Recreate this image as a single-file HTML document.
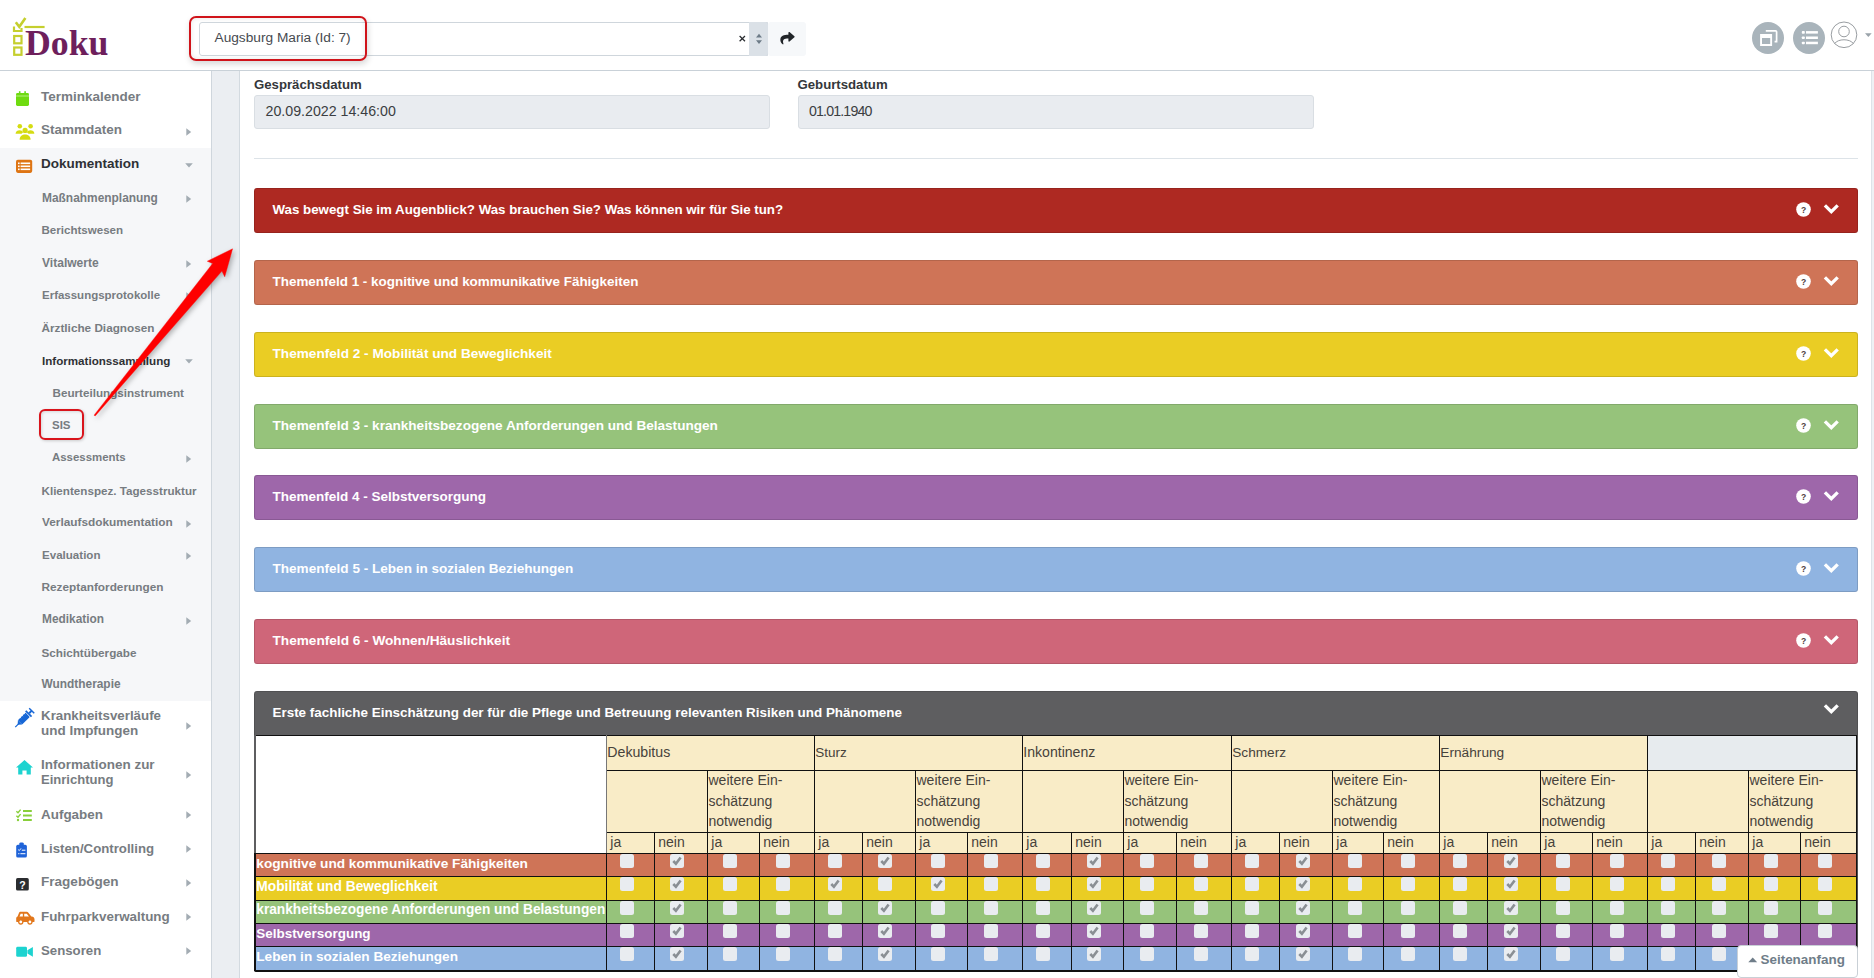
<!DOCTYPE html><html><head><meta charset="utf-8"><style>
html,body{margin:0;padding:0;}
body{width:1874px;height:978px;overflow:hidden;position:relative;background:#fff;font-family:"Liberation Sans",sans-serif;}
.t{position:absolute;white-space:nowrap;line-height:1;}
.r{position:absolute;}
svg{position:absolute;overflow:visible;}
</style></head><body>
<div class="r" style="left:0.00px;top:70.00px;width:1874.00px;height:1.00px;background:#c9d1d8;"></div>
<div class="r" style="left:0.00px;top:148.00px;width:211.00px;height:553.00px;background:#f6f7f9;"></div>
<div class="r" style="left:211.00px;top:71.00px;width:1.00px;height:907.00px;background:#cfd6dd;"></div>
<div class="r" style="left:212.00px;top:71.00px;width:28.00px;height:907.00px;background:#ebeef2;"></div>
<div class="r" style="left:239.00px;top:71.00px;width:1.00px;height:907.00px;background:#d3dae0;"></div>
<div class="r" style="left:1871.00px;top:71.00px;width:1.00px;height:907.00px;background:#dde3e8;"></div>
<div class="r" style="left:1872.00px;top:71.00px;width:2.00px;height:907.00px;background:#eef1f4;"></div>
<svg style="left:0;top:0" width="120" height="70" viewBox="0 0 120 70">
<g fill="none" stroke="#c5cf2e" stroke-width="2.2">
<path d="M14 26.5 V31 H21.5 V28"/>
<rect x="14.2" y="36" width="7.3" height="7.3"/>
<rect x="14.2" y="47.5" width="7.3" height="7.3"/>
<path d="M15.8 22.2 L19.3 26.8 L25.4 18" stroke-width="2.6"/>
<path d="M24.5 27 H44.6" stroke-width="2.2"/>
</g>
<text x="25" y="55" font-family="Liberation Serif" font-weight="bold" font-size="35.5" fill="#6e1f5c" textLength="83.5" lengthAdjust="spacingAndGlyphs">Doku</text>
</svg>
<div class="r" style="left:199.00px;top:22.00px;width:569.00px;height:34.00px;background:#fff;box-sizing:border-box;border:1px solid #cfd6dc;border-radius:3px 0 0 3px;"></div>
<div class="r" style="left:749.00px;top:22.00px;width:19.00px;height:34.00px;background:#dbe1e7;border-radius:0 3px 3px 0;"></div>
<div class="r" style="left:768.00px;top:22.00px;width:38.00px;height:34.00px;background:#f6f8fa;border-radius:3px;"></div>
<div class="t" style="left:214.50px;top:31.10px;font-size:13.7px;font-weight:400;color:#464a4f;">Augsburg Maria (Id: 7)</div>
<svg style="left:738px;top:34px" width="9" height="9" viewBox="0 0 9 9"><path d="M1.6 2.0 L7.0 7.3 M7.0 2.0 L1.6 7.3" stroke="#2a2d31" stroke-width="1.25"/></svg>
<svg style="left:754px;top:32px" width="10" height="14" viewBox="0 0 10 14"><path d="M2 5.5 L5 1.8 L8 5.5Z M2 8.2 L5 12 L8 8.2Z" fill="#6d7b87"/></svg>
<svg style="left:780px;top:30.7px" width="15" height="14" viewBox="0 0 512 500"><path d="M503.691 189.836L327.687 37.851C312.281 24.546 288 35.347 288 56.015v80.053C127.371 137.907 0 170.1 0 322.326c0 61.441 39.581 122.309 83.333 154.132 13.653 9.931 33.111-2.533 28.077-18.631C66.066 312.814 132.917 274.316 288 272.085V360c0 20.7 24.3 31.453 39.687 18.164l176.004-152c11.071-9.562 11.086-26.753 0-36.328z" fill="#212529"/></svg>
<div class="r" style="left:189.00px;top:15.50px;width:178.00px;height:45.50px;background:transparent;box-sizing:border-box;border:2.5px solid #d0131a;border-radius:7px;box-shadow:inset 0 0 5px rgba(0,0,0,0.10), 1px 3px 6px rgba(0,0,0,0.16);"></div>
<svg style="left:1751px;top:21px" width="124" height="34" viewBox="0 0 124 34">
<circle cx="17" cy="17" r="16" fill="#a9b4bb"/>
<path d="M14.8 9.8 H24.6 C25.2 9.8 25.6 10.2 25.6 10.8 V20.6 H23.6" fill="none" stroke="#fff" stroke-width="1.7"/>
<path d="M9.1 13 H21.1 V25 H9.1Z M11 17 V23.1 H19.2 V17Z" fill="#fff" fill-rule="evenodd"/>
<circle cx="58" cy="17" r="16" fill="#a9b4bb"/>
<rect x="50.8" y="10.1" width="3" height="2.6" rx="0.8" fill="#fff"/>
<rect x="50.8" y="15.5" width="3" height="2.6" rx="0.8" fill="#fff"/>
<rect x="50.8" y="20.7" width="3" height="2.6" rx="0.8" fill="#fff"/>
<rect x="55" y="10.1" width="11.9" height="2.5" fill="#fff"/>
<rect x="55" y="15.5" width="11.9" height="2.5" fill="#fff"/>
<rect x="55" y="20.7" width="11.9" height="2.5" fill="#fff"/>
<circle cx="93" cy="13.8" r="12.8" fill="none" stroke="#8d9296" stroke-width="0.9"/>
<circle cx="93" cy="10.5" r="5.3" fill="none" stroke="#8d9296" stroke-width="0.9"/>
<path d="M83.6 22.6 C87 17.5 99 17.5 102.4 22.6" fill="none" stroke="#8d9296" stroke-width="0.9"/>
<path d="M114 12.3 H120.7 L117.35 16Z" fill="#9aa3aa"/>
</svg>
<div class="t" style="left:41.00px;top:89.57px;font-size:13.5px;font-weight:700;color:#777c81;">Terminkalender</div>
<div class="t" style="left:41.00px;top:123.37px;font-size:13.5px;font-weight:700;color:#777c81;">Stammdaten</div>
<svg style="left:186px;top:127.50px" width="6" height="8" viewBox="0 0 6 8"><path d="M0.3 0.3 L5.2 4 L0.3 7.7Z" fill="#a3acb3"/></svg>
<div class="t" style="left:41.00px;top:157.37px;font-size:13.5px;font-weight:700;color:#2f3135;">Dokumentation</div>
<svg style="left:184.5px;top:163.30px" width="8" height="5" viewBox="0 0 8 5"><path d="M0.2 0.2 H7.8 L4 4.6Z" fill="#a3acb3"/></svg>
<div class="t" style="left:42.00px;top:192.60px;font-size:11.93px;font-weight:700;color:#777c81;">Maßnahmenplanung</div>
<svg style="left:186px;top:195.20px" width="6" height="8" viewBox="0 0 6 8"><path d="M0.3 0.3 L5.2 4 L0.3 7.7Z" fill="#a3acb3"/></svg>
<div class="t" style="left:41.50px;top:225.34px;font-size:11.57px;font-weight:700;color:#777c81;">Berichtswesen</div>
<div class="t" style="left:42.00px;top:257.36px;font-size:12.05px;font-weight:700;color:#777c81;">Vitalwerte</div>
<svg style="left:186px;top:260.06px" width="6" height="8" viewBox="0 0 6 8"><path d="M0.3 0.3 L5.2 4 L0.3 7.7Z" fill="#a3acb3"/></svg>
<div class="t" style="left:42.00px;top:290.26px;font-size:11.49px;font-weight:700;color:#777c81;">Erfassungsprotokolle</div>
<svg style="left:186px;top:292.49px" width="6" height="8" viewBox="0 0 6 8"><path d="M0.3 0.3 L5.2 4 L0.3 7.7Z" fill="#a3acb3"/></svg>
<div class="t" style="left:41.50px;top:322.47px;font-size:11.76px;font-weight:700;color:#777c81;">Ärztliche Diagnosen</div>
<div class="t" style="left:42.00px;top:355.02px;font-size:11.61px;font-weight:700;color:#2f3135;">Informationssammlung</div>
<svg style="left:184.5px;top:359.15px" width="8" height="5" viewBox="0 0 8 5"><path d="M0.2 0.2 H7.8 L4 4.6Z" fill="#a3acb3"/></svg>
<div class="t" style="left:52.50px;top:387.40px;font-size:11.67px;font-weight:700;color:#777c81;">Beurteilungsinstrument</div>
<div class="t" style="left:52.00px;top:419.98px;font-size:11.5px;font-weight:700;color:#777c81;">SIS</div>
<div class="t" style="left:52.00px;top:452.46px;font-size:11.43px;font-weight:700;color:#777c81;">Assessments</div>
<svg style="left:186px;top:454.64px" width="6" height="8" viewBox="0 0 6 8"><path d="M0.3 0.3 L5.2 4 L0.3 7.7Z" fill="#a3acb3"/></svg>
<div class="t" style="left:41.50px;top:484.71px;font-size:11.65px;font-weight:700;color:#777c81;">Klientenspez. Tagesstruktur</div>
<div class="t" style="left:42.00px;top:516.98px;font-size:11.84px;font-weight:700;color:#777c81;">Verlaufsdokumentation</div>
<svg style="left:186px;top:519.50px" width="6" height="8" viewBox="0 0 6 8"><path d="M0.3 0.3 L5.2 4 L0.3 7.7Z" fill="#a3acb3"/></svg>
<div class="t" style="left:42.00px;top:549.64px;font-size:11.57px;font-weight:700;color:#777c81;">Evaluation</div>
<svg style="left:186px;top:551.93px" width="6" height="8" viewBox="0 0 6 8"><path d="M0.3 0.3 L5.2 4 L0.3 7.7Z" fill="#a3acb3"/></svg>
<div class="t" style="left:41.50px;top:581.86px;font-size:11.81px;font-weight:700;color:#777c81;">Rezeptanforderungen</div>
<div class="t" style="left:42.00px;top:614.23px;font-size:11.89px;font-weight:700;color:#777c81;">Medikation</div>
<svg style="left:186px;top:616.79px" width="6" height="8" viewBox="0 0 6 8"><path d="M0.3 0.3 L5.2 4 L0.3 7.7Z" fill="#a3acb3"/></svg>
<div class="t" style="left:41.50px;top:646.81px;font-size:11.71px;font-weight:700;color:#777c81;">Schichtübergabe</div>
<div class="t" style="left:41.50px;top:679.08px;font-size:11.9px;font-weight:700;color:#777c81;">Wundtherapie</div>
<div class="t" style="left:41.00px;top:709.32px;font-size:13.33px;font-weight:700;color:#777c81;">Krankheitsverläufe</div>
<div class="t" style="left:41.00px;top:723.99px;font-size:13.48px;font-weight:700;color:#777c81;">und Impfungen</div>
<svg style="left:186px;top:721.50px" width="6" height="8" viewBox="0 0 6 8"><path d="M0.3 0.3 L5.2 4 L0.3 7.7Z" fill="#a3acb3"/></svg>
<div class="t" style="left:41.00px;top:758.41px;font-size:13.46px;font-weight:700;color:#777c81;">Informationen zur</div>
<div class="t" style="left:41.00px;top:772.65px;font-size:13.05px;font-weight:700;color:#777c81;">Einrichtung</div>
<svg style="left:186px;top:770.50px" width="6" height="8" viewBox="0 0 6 8"><path d="M0.3 0.3 L5.2 4 L0.3 7.7Z" fill="#a3acb3"/></svg>
<div class="t" style="left:41.00px;top:807.51px;font-size:13.45px;font-weight:700;color:#777c81;">Aufgaben</div>
<svg style="left:186px;top:810.90px" width="6" height="8" viewBox="0 0 6 8"><path d="M0.3 0.3 L5.2 4 L0.3 7.7Z" fill="#a3acb3"/></svg>
<div class="t" style="left:41.00px;top:841.73px;font-size:13.23px;font-weight:700;color:#777c81;">Listen/Controlling</div>
<svg style="left:186px;top:844.93px" width="6" height="8" viewBox="0 0 6 8"><path d="M0.3 0.3 L5.2 4 L0.3 7.7Z" fill="#a3acb3"/></svg>
<div class="t" style="left:41.00px;top:875.48px;font-size:13.56px;font-weight:700;color:#777c81;">Fragebögen</div>
<svg style="left:186px;top:878.96px" width="6" height="8" viewBox="0 0 6 8"><path d="M0.3 0.3 L5.2 4 L0.3 7.7Z" fill="#a3acb3"/></svg>
<div class="t" style="left:41.00px;top:909.65px;font-size:13.4px;font-weight:700;color:#777c81;">Fuhrparkverwaltung</div>
<svg style="left:186px;top:912.99px" width="6" height="8" viewBox="0 0 6 8"><path d="M0.3 0.3 L5.2 4 L0.3 7.7Z" fill="#a3acb3"/></svg>
<div class="t" style="left:41.00px;top:943.82px;font-size:13.23px;font-weight:700;color:#777c81;">Sensoren</div>
<svg style="left:186px;top:947.02px" width="6" height="8" viewBox="0 0 6 8"><path d="M0.3 0.3 L5.2 4 L0.3 7.7Z" fill="#a3acb3"/></svg>
<svg style="left:0;top:0" width="40" height="978" viewBox="0 0 40 978">
<rect x="16" y="93" width="13" height="12.9" rx="1.4" fill="#6fdb10"/>
<rect x="18.9" y="91.2" width="1.6" height="3" fill="#6bd91c"/><rect x="24.3" y="91.2" width="1.6" height="3" fill="#6bd91c"/>
<rect x="16" y="95.6" width="13" height="0.8" fill="#c8f5a0"/>
<g fill="#d5dc12">
<circle cx="19.8" cy="126.3" r="2.3"/><circle cx="30.6" cy="126.3" r="2.3"/><circle cx="25.1" cy="130.4" r="2.6"/>
<path d="M15.6 133.8 C15.6 129.6 22.4 129.3 23 132.6 L21.5 133.8Z"/><path d="M34.4 133.8 C34.4 129.6 27.6 129.3 27 132.6 L28.5 133.8Z"/>
<path d="M19.6 139.8 C19.6 132.8 30.6 132.8 30.6 139.8Z"/>
</g>
<rect x="16" y="159.8" width="16.2" height="13.1" rx="1.8" fill="#de7514"/>
<g fill="#fff"><rect x="18" y="162.5" width="1.6" height="1.6"/><rect x="18" y="165.5" width="1.6" height="1.6"/><rect x="18" y="168.5" width="1.6" height="1.6"/>
<rect x="20.6" y="162.5" width="9.5" height="1.6"/><rect x="20.6" y="165.5" width="9.5" height="1.6"/><rect x="20.6" y="168.5" width="9.5" height="1.6"/></g>
<g transform="translate(23.2,719.2) rotate(45) scale(1.12)" fill="#1767d6">
<rect x="-2.7" y="-5.6" width="5.4" height="9.6" rx="0.6"/><path d="M-2.7 4 L0 7 L2.7 4Z"/><rect x="-0.55" y="5" width="1.1" height="5"/>
<rect x="-3.7" y="-7.6" width="7.4" height="1.5"/><rect x="-0.9" y="-10.5" width="1.8" height="3"/><rect x="-3.2" y="-11.4" width="6.4" height="1.3"/>
</g>
<g stroke="#fff" stroke-width="0.8"><path d="M19.2 716.3 L21.1 718.2 M21.2 714.3 L23.1 716.2 M23.2 712.3 L25.1 714.2"/></g>
<path d="M16 767.6 L24.5 760 L33 767.6 H30.8 V774.5 H26.6 V770.4 H22.4 V774.5 H18.2 V767.6Z" fill="#1dd3d0"/>
<g fill="#88cf3a">
<rect x="23" y="810" width="8.8" height="2"/><rect x="23" y="814.5" width="8.8" height="2"/><rect x="23" y="819" width="8.8" height="2"/>
<path d="M16.4 811.3 L18 812.8 L20.6 809.6" fill="none" stroke="#88cf3a" stroke-width="1.4"/>
<path d="M16.4 815.8 L18 817.3 L20.6 814.1" fill="none" stroke="#88cf3a" stroke-width="1.4"/>
<circle cx="18" cy="820" r="1.2"/>
</g>
<rect x="16.2" y="844.8" width="10.7" height="12.8" rx="1.6" fill="#1f63d8"/>
<path d="M19.3 845.2 V843.8 C19.3 842.6 20.2 842.6 21.5 842.6 C22.8 842.6 23.8 842.6 23.8 843.8 V845.2Z" fill="#1f63d8"/>
<path d="M18.2 849.6 L19.3 850.6 L21 848.4" stroke="#fff" stroke-width="0.9" fill="none"/>
<rect x="21.8" y="849.7" width="3.6" height="1" fill="#fff"/><rect x="18.2" y="853.2" width="1.2" height="1" fill="#fff"/><rect x="20.4" y="853.2" width="5" height="1" fill="#fff"/>
<rect x="16" y="878.1" width="12.8" height="12.5" rx="1.6" fill="#2b2d30"/>
<text x="22.4" y="888.6" font-family="Liberation Sans" font-weight="bold" font-size="10.5" fill="#fff" text-anchor="middle">?</text>
<path transform="translate(16.2,910.9) scale(0.0286)" fill="#e2771c" d="M544 192h-16L419.22 56.02A64.025 64.025 0 0 0 369.24 32H155.33c-26.17 0-49.7 15.930-59.42 40.23L48 194.26C20.44 201.4 0 226.21 0 256v112c0 8.84 7.16 16 16 16h48c0 53.02 42.98 96 96 96s96-42.98 96-96h128c0 53.02 42.98 96 96 96s96-42.98 96-96h48c8.84 0 16-7.160 16-16v-80c0-53.02-42.98-96-96-96zM160 432c-26.47 0-48-21.53-48-48s21.53-48 48-48 48 21.53 48 48-21.53 48-48 48zm72-240H116.93l38.4-96H232v96zm48 0V96h89.24l76.8 96H280zm200 240c-26.47 0-48-21.53-48-48s21.53-48 48-48 48 21.53 48 48-21.53 48-48 48z"/>
<rect x="16.2" y="946.8" width="10.8" height="10" rx="1.4" fill="#1dd3d0"/>
<path d="M27.4 950.2 L32.9 946.9 V956.7 L27.4 953.4Z" fill="#1dd3d0"/>
</svg>
<div class="t" style="left:254.00px;top:77.73px;font-size:13.2px;font-weight:700;color:#34373b;">Gesprächsdatum</div>
<div class="t" style="left:797.50px;top:77.73px;font-size:13.2px;font-weight:700;color:#34373b;">Geburtsdatum</div>
<div class="r" style="left:254.00px;top:95.00px;width:516.00px;height:33.60px;background:#e9ecf0;box-sizing:border-box;border:1px solid #d9dee3;border-radius:3px;"></div>
<div class="r" style="left:797.50px;top:95.00px;width:516.50px;height:33.60px;background:#e9ecf0;box-sizing:border-box;border:1px solid #d9dee3;border-radius:3px;"></div>
<div class="t" style="left:265.60px;top:103.98px;font-size:14.2px;font-weight:400;color:#3b3e42;">20.09.2022 14:46:00</div>
<div class="t" style="left:809.00px;top:103.98px;font-size:14.2px;font-weight:400;color:#3b3e42;letter-spacing:-0.85px;">01.01.1940</div>
<div class="r" style="left:254.00px;top:158.00px;width:1604.00px;height:1.00px;background:#dde3e8;"></div>
<div class="r" style="left:254.00px;top:188.00px;width:1604.00px;height:45.00px;background:#ae2922;box-sizing:border-box;border:1px solid rgba(0,0,0,0.13);border-radius:3px;"></div>
<div class="t" style="left:272.50px;top:203.32px;font-size:13.32px;font-weight:700;color:#fff;">Was bewegt Sie im Augenblick? Was brauchen Sie? Was können wir für Sie tun?</div>
<svg style="left:1795.5px;top:202.00px" width="15" height="15" viewBox="0 0 15 15"><circle cx="7.5" cy="7.5" r="7.3" fill="#fff"/><text x="7.6" y="10.6" font-family="Liberation Sans" font-weight="bold" font-size="8.6" fill="#4d4040" text-anchor="middle">?</text></svg>
<svg style="left:1823px;top:203.00px" width="17" height="12" viewBox="0 0 17 12"><path d="M1.9 2.4 L8.3 8.7 L14.7 2.4" fill="none" stroke="#fff" stroke-width="3.3"/></svg>
<div class="r" style="left:254.00px;top:260.00px;width:1604.00px;height:45.00px;background:#cf7457;box-sizing:border-box;border:1px solid rgba(0,0,0,0.13);border-radius:3px;"></div>
<div class="t" style="left:272.50px;top:275.22px;font-size:13.44px;font-weight:700;color:#fff;">Themenfeld 1 - kognitive und kommunikative Fähigkeiten</div>
<svg style="left:1795.5px;top:274.00px" width="15" height="15" viewBox="0 0 15 15"><circle cx="7.5" cy="7.5" r="7.3" fill="#fff"/><text x="7.6" y="10.6" font-family="Liberation Sans" font-weight="bold" font-size="8.6" fill="#4d4040" text-anchor="middle">?</text></svg>
<svg style="left:1823px;top:275.00px" width="17" height="12" viewBox="0 0 17 12"><path d="M1.9 2.4 L8.3 8.7 L14.7 2.4" fill="none" stroke="#fff" stroke-width="3.3"/></svg>
<div class="r" style="left:254.00px;top:332.00px;width:1604.00px;height:45.00px;background:#eacd24;box-sizing:border-box;border:1px solid rgba(0,0,0,0.13);border-radius:3px;"></div>
<div class="t" style="left:272.50px;top:347.06px;font-size:13.63px;font-weight:700;color:#fff;">Themenfeld 2 - Mobilität und Beweglichkeit</div>
<svg style="left:1795.5px;top:346.00px" width="15" height="15" viewBox="0 0 15 15"><circle cx="7.5" cy="7.5" r="7.3" fill="#fff"/><text x="7.6" y="10.6" font-family="Liberation Sans" font-weight="bold" font-size="8.6" fill="#4d4040" text-anchor="middle">?</text></svg>
<svg style="left:1823px;top:347.00px" width="17" height="12" viewBox="0 0 17 12"><path d="M1.9 2.4 L8.3 8.7 L14.7 2.4" fill="none" stroke="#fff" stroke-width="3.3"/></svg>
<div class="r" style="left:254.00px;top:404.00px;width:1604.00px;height:45.00px;background:#96c37b;box-sizing:border-box;border:1px solid rgba(0,0,0,0.13);border-radius:3px;"></div>
<div class="t" style="left:272.50px;top:419.10px;font-size:13.59px;font-weight:700;color:#fff;">Themenfeld 3 - krankheitsbezogene Anforderungen und Belastungen</div>
<svg style="left:1795.5px;top:418.00px" width="15" height="15" viewBox="0 0 15 15"><circle cx="7.5" cy="7.5" r="7.3" fill="#fff"/><text x="7.6" y="10.6" font-family="Liberation Sans" font-weight="bold" font-size="8.6" fill="#4d4040" text-anchor="middle">?</text></svg>
<svg style="left:1823px;top:419.00px" width="17" height="12" viewBox="0 0 17 12"><path d="M1.9 2.4 L8.3 8.7 L14.7 2.4" fill="none" stroke="#fff" stroke-width="3.3"/></svg>
<div class="r" style="left:254.00px;top:475.00px;width:1604.00px;height:45.00px;background:#9e67aa;box-sizing:border-box;border:1px solid rgba(0,0,0,0.13);border-radius:3px;"></div>
<div class="t" style="left:272.50px;top:490.18px;font-size:13.49px;font-weight:700;color:#fff;">Themenfeld 4 - Selbstversorgung</div>
<svg style="left:1795.5px;top:489.00px" width="15" height="15" viewBox="0 0 15 15"><circle cx="7.5" cy="7.5" r="7.3" fill="#fff"/><text x="7.6" y="10.6" font-family="Liberation Sans" font-weight="bold" font-size="8.6" fill="#4d4040" text-anchor="middle">?</text></svg>
<svg style="left:1823px;top:490.00px" width="17" height="12" viewBox="0 0 17 12"><path d="M1.9 2.4 L8.3 8.7 L14.7 2.4" fill="none" stroke="#fff" stroke-width="3.3"/></svg>
<div class="r" style="left:254.00px;top:547.00px;width:1604.00px;height:45.00px;background:#90b4e1;box-sizing:border-box;border:1px solid rgba(0,0,0,0.13);border-radius:3px;"></div>
<div class="t" style="left:272.50px;top:562.11px;font-size:13.57px;font-weight:700;color:#fff;">Themenfeld 5 - Leben in sozialen Beziehungen</div>
<svg style="left:1795.5px;top:561.00px" width="15" height="15" viewBox="0 0 15 15"><circle cx="7.5" cy="7.5" r="7.3" fill="#fff"/><text x="7.6" y="10.6" font-family="Liberation Sans" font-weight="bold" font-size="8.6" fill="#4d4040" text-anchor="middle">?</text></svg>
<svg style="left:1823px;top:562.00px" width="17" height="12" viewBox="0 0 17 12"><path d="M1.9 2.4 L8.3 8.7 L14.7 2.4" fill="none" stroke="#fff" stroke-width="3.3"/></svg>
<div class="r" style="left:254.00px;top:619.00px;width:1604.00px;height:45.00px;background:#cf6679;box-sizing:border-box;border:1px solid rgba(0,0,0,0.13);border-radius:3px;"></div>
<div class="t" style="left:272.50px;top:634.06px;font-size:13.63px;font-weight:700;color:#fff;">Themenfeld 6 - Wohnen/Häuslichkeit</div>
<svg style="left:1795.5px;top:633.00px" width="15" height="15" viewBox="0 0 15 15"><circle cx="7.5" cy="7.5" r="7.3" fill="#fff"/><text x="7.6" y="10.6" font-family="Liberation Sans" font-weight="bold" font-size="8.6" fill="#4d4040" text-anchor="middle">?</text></svg>
<svg style="left:1823px;top:634.00px" width="17" height="12" viewBox="0 0 17 12"><path d="M1.9 2.4 L8.3 8.7 L14.7 2.4" fill="none" stroke="#fff" stroke-width="3.3"/></svg>
<div class="r" style="left:254.00px;top:691.00px;width:1604.00px;height:281.00px;background:#5e5e60;box-sizing:border-box;border:1px solid rgba(0,0,0,0.13);border-radius:3px 3px 3px 3px;"></div>
<div class="t" style="left:272.50px;top:705.63px;font-size:13.43px;font-weight:700;color:#fff;">Erste fachliche Einschätzung der für die Pflege und Betreuung relevanten Risiken und Phänomene</div>
<svg style="left:1823px;top:703px" width="17" height="12" viewBox="0 0 17 12"><path d="M1.9 2.4 L8.3 8.7 L14.7 2.4" fill="none" stroke="#fff" stroke-width="3.3"/></svg>
<div class="r" style="left:256.00px;top:735.00px;width:1600.00px;height:118.00px;background:#fff;"></div>
<div class="r" style="left:606.00px;top:735.00px;width:208.00px;height:35.30px;background:#f9ecc7;"></div>
<div class="r" style="left:606.00px;top:770.30px;width:208.00px;height:82.70px;background:#f9ecc7;"></div>
<div class="r" style="left:814.00px;top:735.00px;width:208.00px;height:35.30px;background:#f9ecc7;"></div>
<div class="r" style="left:814.00px;top:770.30px;width:208.00px;height:82.70px;background:#f9ecc7;"></div>
<div class="r" style="left:1022.00px;top:735.00px;width:209.00px;height:35.30px;background:#f9ecc7;"></div>
<div class="r" style="left:1022.00px;top:770.30px;width:209.00px;height:82.70px;background:#f9ecc7;"></div>
<div class="r" style="left:1231.00px;top:735.00px;width:208.00px;height:35.30px;background:#f9ecc7;"></div>
<div class="r" style="left:1231.00px;top:770.30px;width:208.00px;height:82.70px;background:#f9ecc7;"></div>
<div class="r" style="left:1439.00px;top:735.00px;width:208.00px;height:35.30px;background:#f9ecc7;"></div>
<div class="r" style="left:1439.00px;top:770.30px;width:208.00px;height:82.70px;background:#f9ecc7;"></div>
<div class="r" style="left:1647.00px;top:735.00px;width:209.00px;height:35.30px;background:#e7ebee;"></div>
<div class="r" style="left:1647.00px;top:770.30px;width:209.00px;height:82.70px;background:#f9ecc7;"></div>
<div class="r" style="left:256.00px;top:853.00px;width:1600.00px;height:23.30px;background:#cf7457;"></div>
<div class="r" style="left:256.00px;top:876.30px;width:1600.00px;height:23.30px;background:#eacd24;"></div>
<div class="r" style="left:256.00px;top:899.60px;width:1600.00px;height:23.30px;background:#96c37b;"></div>
<div class="r" style="left:256.00px;top:922.90px;width:1600.00px;height:23.30px;background:#9e67aa;"></div>
<div class="r" style="left:256.00px;top:946.20px;width:1600.00px;height:23.40px;background:#90b4e1;"></div>
<div class="r" style="left:256.00px;top:735.00px;width:1601.00px;height:1.00px;background:#111;"></div>
<div class="r" style="left:606.00px;top:770.30px;width:1250.00px;height:1.00px;background:#111;"></div>
<div class="r" style="left:606.00px;top:832.40px;width:1250.00px;height:1.00px;background:#111;"></div>
<div class="r" style="left:256.00px;top:853.00px;width:1600.00px;height:1.00px;background:#111;"></div>
<div class="r" style="left:256.00px;top:876.30px;width:1600.00px;height:1.00px;background:#111;"></div>
<div class="r" style="left:256.00px;top:899.60px;width:1600.00px;height:1.00px;background:#111;"></div>
<div class="r" style="left:256.00px;top:922.90px;width:1600.00px;height:1.00px;background:#111;"></div>
<div class="r" style="left:256.00px;top:946.20px;width:1600.00px;height:1.00px;background:#111;"></div>
<div class="r" style="left:254.00px;top:970.00px;width:1604.00px;height:1.60px;background:#111;border-radius:0 0 3px 3px;"></div>
<div class="r" style="left:254.00px;top:735.00px;width:2.00px;height:118.00px;background:#5e5e60;"></div>
<div class="r" style="left:254.00px;top:853.00px;width:1.60px;height:118.00px;background:#111;"></div>
<div class="r" style="left:1856.00px;top:735.00px;width:1.20px;height:235.00px;background:#111;"></div>
<div class="r" style="left:606.00px;top:735.00px;width:1.00px;height:118.00px;background:#777;"></div>
<div class="r" style="left:606.00px;top:853.00px;width:1.00px;height:117.00px;background:#111;"></div>
<div class="r" style="left:707.00px;top:770.30px;width:1.00px;height:199.70px;background:#111;"></div>
<div class="r" style="left:654.00px;top:832.40px;width:1.00px;height:137.60px;background:#111;"></div>
<div class="r" style="left:759.00px;top:832.40px;width:1.00px;height:137.60px;background:#111;"></div>
<div class="r" style="left:814.00px;top:735.00px;width:1.00px;height:235.00px;background:#111;"></div>
<div class="r" style="left:915.00px;top:770.30px;width:1.00px;height:199.70px;background:#111;"></div>
<div class="r" style="left:862.00px;top:832.40px;width:1.00px;height:137.60px;background:#111;"></div>
<div class="r" style="left:967.00px;top:832.40px;width:1.00px;height:137.60px;background:#111;"></div>
<div class="r" style="left:1022.00px;top:735.00px;width:1.00px;height:235.00px;background:#111;"></div>
<div class="r" style="left:1123.00px;top:770.30px;width:1.00px;height:199.70px;background:#111;"></div>
<div class="r" style="left:1071.00px;top:832.40px;width:1.00px;height:137.60px;background:#111;"></div>
<div class="r" style="left:1176.00px;top:832.40px;width:1.00px;height:137.60px;background:#111;"></div>
<div class="r" style="left:1231.00px;top:735.00px;width:1.00px;height:235.00px;background:#111;"></div>
<div class="r" style="left:1332.00px;top:770.30px;width:1.00px;height:199.70px;background:#111;"></div>
<div class="r" style="left:1279.00px;top:832.40px;width:1.00px;height:137.60px;background:#111;"></div>
<div class="r" style="left:1383.00px;top:832.40px;width:1.00px;height:137.60px;background:#111;"></div>
<div class="r" style="left:1439.00px;top:735.00px;width:1.00px;height:235.00px;background:#111;"></div>
<div class="r" style="left:1540.00px;top:770.30px;width:1.00px;height:199.70px;background:#111;"></div>
<div class="r" style="left:1487.00px;top:832.40px;width:1.00px;height:137.60px;background:#111;"></div>
<div class="r" style="left:1592.00px;top:832.40px;width:1.00px;height:137.60px;background:#111;"></div>
<div class="r" style="left:1647.00px;top:735.00px;width:1.00px;height:235.00px;background:#111;"></div>
<div class="r" style="left:1748.00px;top:770.30px;width:1.00px;height:199.70px;background:#111;"></div>
<div class="r" style="left:1695.00px;top:832.40px;width:1.00px;height:137.60px;background:#111;"></div>
<div class="r" style="left:1800.00px;top:832.40px;width:1.00px;height:137.60px;background:#111;"></div>
<div class="t" style="left:607.30px;top:745.31px;font-size:14.17px;font-weight:400;color:#47423b;">Dekubitus</div>
<div class="t" style="left:708.50px;top:773.15px;font-size:14.0px;font-weight:400;color:#47423b;">weitere Ein-</div>
<div class="t" style="left:708.50px;top:793.55px;font-size:14.0px;font-weight:400;color:#47423b;">schätzung</div>
<div class="t" style="left:708.50px;top:814.15px;font-size:14.0px;font-weight:400;color:#47423b;">notwendig</div>
<div class="t" style="left:610.30px;top:835.45px;font-size:14.0px;font-weight:400;color:#47423b;">ja</div>
<div class="t" style="left:658.30px;top:835.45px;font-size:14.0px;font-weight:400;color:#47423b;">nein</div>
<div class="t" style="left:711.30px;top:835.45px;font-size:14.0px;font-weight:400;color:#47423b;">ja</div>
<div class="t" style="left:763.30px;top:835.45px;font-size:14.0px;font-weight:400;color:#47423b;">nein</div>
<div class="t" style="left:815.30px;top:745.87px;font-size:13.5px;font-weight:400;color:#47423b;">Sturz</div>
<div class="t" style="left:916.50px;top:773.15px;font-size:14.0px;font-weight:400;color:#47423b;">weitere Ein-</div>
<div class="t" style="left:916.50px;top:793.55px;font-size:14.0px;font-weight:400;color:#47423b;">schätzung</div>
<div class="t" style="left:916.50px;top:814.15px;font-size:14.0px;font-weight:400;color:#47423b;">notwendig</div>
<div class="t" style="left:818.30px;top:835.45px;font-size:14.0px;font-weight:400;color:#47423b;">ja</div>
<div class="t" style="left:866.30px;top:835.45px;font-size:14.0px;font-weight:400;color:#47423b;">nein</div>
<div class="t" style="left:919.30px;top:835.45px;font-size:14.0px;font-weight:400;color:#47423b;">ja</div>
<div class="t" style="left:971.30px;top:835.45px;font-size:14.0px;font-weight:400;color:#47423b;">nein</div>
<div class="t" style="left:1023.30px;top:745.38px;font-size:14.08px;font-weight:400;color:#47423b;">Inkontinenz</div>
<div class="t" style="left:1124.50px;top:773.15px;font-size:14.0px;font-weight:400;color:#47423b;">weitere Ein-</div>
<div class="t" style="left:1124.50px;top:793.55px;font-size:14.0px;font-weight:400;color:#47423b;">schätzung</div>
<div class="t" style="left:1124.50px;top:814.15px;font-size:14.0px;font-weight:400;color:#47423b;">notwendig</div>
<div class="t" style="left:1026.30px;top:835.45px;font-size:14.0px;font-weight:400;color:#47423b;">ja</div>
<div class="t" style="left:1075.30px;top:835.45px;font-size:14.0px;font-weight:400;color:#47423b;">nein</div>
<div class="t" style="left:1127.30px;top:835.45px;font-size:14.0px;font-weight:400;color:#47423b;">ja</div>
<div class="t" style="left:1180.30px;top:835.45px;font-size:14.0px;font-weight:400;color:#47423b;">nein</div>
<div class="t" style="left:1232.30px;top:745.78px;font-size:13.61px;font-weight:400;color:#47423b;">Schmerz</div>
<div class="t" style="left:1333.50px;top:773.15px;font-size:14.0px;font-weight:400;color:#47423b;">weitere Ein-</div>
<div class="t" style="left:1333.50px;top:793.55px;font-size:14.0px;font-weight:400;color:#47423b;">schätzung</div>
<div class="t" style="left:1333.50px;top:814.15px;font-size:14.0px;font-weight:400;color:#47423b;">notwendig</div>
<div class="t" style="left:1235.30px;top:835.45px;font-size:14.0px;font-weight:400;color:#47423b;">ja</div>
<div class="t" style="left:1283.30px;top:835.45px;font-size:14.0px;font-weight:400;color:#47423b;">nein</div>
<div class="t" style="left:1336.30px;top:835.45px;font-size:14.0px;font-weight:400;color:#47423b;">ja</div>
<div class="t" style="left:1387.30px;top:835.45px;font-size:14.0px;font-weight:400;color:#47423b;">nein</div>
<div class="t" style="left:1440.30px;top:745.70px;font-size:13.7px;font-weight:400;color:#47423b;">Ernährung</div>
<div class="t" style="left:1541.50px;top:773.15px;font-size:14.0px;font-weight:400;color:#47423b;">weitere Ein-</div>
<div class="t" style="left:1541.50px;top:793.55px;font-size:14.0px;font-weight:400;color:#47423b;">schätzung</div>
<div class="t" style="left:1541.50px;top:814.15px;font-size:14.0px;font-weight:400;color:#47423b;">notwendig</div>
<div class="t" style="left:1443.30px;top:835.45px;font-size:14.0px;font-weight:400;color:#47423b;">ja</div>
<div class="t" style="left:1491.30px;top:835.45px;font-size:14.0px;font-weight:400;color:#47423b;">nein</div>
<div class="t" style="left:1544.30px;top:835.45px;font-size:14.0px;font-weight:400;color:#47423b;">ja</div>
<div class="t" style="left:1596.30px;top:835.45px;font-size:14.0px;font-weight:400;color:#47423b;">nein</div>
<div class="t" style="left:1749.50px;top:773.15px;font-size:14.0px;font-weight:400;color:#47423b;">weitere Ein-</div>
<div class="t" style="left:1749.50px;top:793.55px;font-size:14.0px;font-weight:400;color:#47423b;">schätzung</div>
<div class="t" style="left:1749.50px;top:814.15px;font-size:14.0px;font-weight:400;color:#47423b;">notwendig</div>
<div class="t" style="left:1651.30px;top:835.45px;font-size:14.0px;font-weight:400;color:#47423b;">ja</div>
<div class="t" style="left:1699.30px;top:835.45px;font-size:14.0px;font-weight:400;color:#47423b;">nein</div>
<div class="t" style="left:1752.30px;top:835.45px;font-size:14.0px;font-weight:400;color:#47423b;">ja</div>
<div class="t" style="left:1804.30px;top:835.45px;font-size:14.0px;font-weight:400;color:#47423b;">nein</div>
<div class="t" style="left:256.30px;top:856.73px;font-size:13.67px;font-weight:700;color:#fff;">kognitive und kommunikative Fähigkeiten</div>
<div class="t" style="left:256.30px;top:879.94px;font-size:13.78px;font-weight:700;color:#fff;">Mobilität und Beweglichkeit</div>
<div class="t" style="left:256.30px;top:903.29px;font-size:13.71px;font-weight:700;color:#fff;">krankheitsbezogene Anforderungen und Belastungen</div>
<div class="t" style="left:256.30px;top:926.82px;font-size:13.44px;font-weight:700;color:#fff;">Selbstversorgung</div>
<div class="t" style="left:256.30px;top:949.99px;font-size:13.6px;font-weight:700;color:#fff;">Leben in sozialen Beziehungen</div>
<svg style="left:620.00px;top:854.00px" width="14" height="14" viewBox="0 0 14 14"><rect x="0" y="0" width="14" height="14" rx="2.5" fill="#e9ecf0"/></svg>
<svg style="left:670.00px;top:854.00px" width="14" height="14" viewBox="0 0 14 14"><rect x="0" y="0" width="14" height="14" rx="2.5" fill="#e9ecf0"/><path d="M3.3 7.0 L5.9 9.8 L10.6 3.4" fill="none" stroke="#8a8f94" stroke-width="2.6"/></svg>
<svg style="left:723.00px;top:854.00px" width="14" height="14" viewBox="0 0 14 14"><rect x="0" y="0" width="14" height="14" rx="2.5" fill="#e9ecf0"/></svg>
<svg style="left:776.00px;top:854.00px" width="14" height="14" viewBox="0 0 14 14"><rect x="0" y="0" width="14" height="14" rx="2.5" fill="#e9ecf0"/></svg>
<svg style="left:828.00px;top:854.00px" width="14" height="14" viewBox="0 0 14 14"><rect x="0" y="0" width="14" height="14" rx="2.5" fill="#e9ecf0"/></svg>
<svg style="left:878.00px;top:854.00px" width="14" height="14" viewBox="0 0 14 14"><rect x="0" y="0" width="14" height="14" rx="2.5" fill="#e9ecf0"/><path d="M3.3 7.0 L5.9 9.8 L10.6 3.4" fill="none" stroke="#8a8f94" stroke-width="2.6"/></svg>
<svg style="left:931.00px;top:854.00px" width="14" height="14" viewBox="0 0 14 14"><rect x="0" y="0" width="14" height="14" rx="2.5" fill="#e9ecf0"/></svg>
<svg style="left:984.00px;top:854.00px" width="14" height="14" viewBox="0 0 14 14"><rect x="0" y="0" width="14" height="14" rx="2.5" fill="#e9ecf0"/></svg>
<svg style="left:1036.00px;top:854.00px" width="14" height="14" viewBox="0 0 14 14"><rect x="0" y="0" width="14" height="14" rx="2.5" fill="#e9ecf0"/></svg>
<svg style="left:1087.00px;top:854.00px" width="14" height="14" viewBox="0 0 14 14"><rect x="0" y="0" width="14" height="14" rx="2.5" fill="#e9ecf0"/><path d="M3.3 7.0 L5.9 9.8 L10.6 3.4" fill="none" stroke="#8a8f94" stroke-width="2.6"/></svg>
<svg style="left:1140.00px;top:854.00px" width="14" height="14" viewBox="0 0 14 14"><rect x="0" y="0" width="14" height="14" rx="2.5" fill="#e9ecf0"/></svg>
<svg style="left:1194.00px;top:854.00px" width="14" height="14" viewBox="0 0 14 14"><rect x="0" y="0" width="14" height="14" rx="2.5" fill="#e9ecf0"/></svg>
<svg style="left:1245.00px;top:854.00px" width="14" height="14" viewBox="0 0 14 14"><rect x="0" y="0" width="14" height="14" rx="2.5" fill="#e9ecf0"/></svg>
<svg style="left:1296.00px;top:854.00px" width="14" height="14" viewBox="0 0 14 14"><rect x="0" y="0" width="14" height="14" rx="2.5" fill="#e9ecf0"/><path d="M3.3 7.0 L5.9 9.8 L10.6 3.4" fill="none" stroke="#8a8f94" stroke-width="2.6"/></svg>
<svg style="left:1348.00px;top:854.00px" width="14" height="14" viewBox="0 0 14 14"><rect x="0" y="0" width="14" height="14" rx="2.5" fill="#e9ecf0"/></svg>
<svg style="left:1401.00px;top:854.00px" width="14" height="14" viewBox="0 0 14 14"><rect x="0" y="0" width="14" height="14" rx="2.5" fill="#e9ecf0"/></svg>
<svg style="left:1453.00px;top:854.00px" width="14" height="14" viewBox="0 0 14 14"><rect x="0" y="0" width="14" height="14" rx="2.5" fill="#e9ecf0"/></svg>
<svg style="left:1504.00px;top:854.00px" width="14" height="14" viewBox="0 0 14 14"><rect x="0" y="0" width="14" height="14" rx="2.5" fill="#e9ecf0"/><path d="M3.3 7.0 L5.9 9.8 L10.6 3.4" fill="none" stroke="#8a8f94" stroke-width="2.6"/></svg>
<svg style="left:1556.00px;top:854.00px" width="14" height="14" viewBox="0 0 14 14"><rect x="0" y="0" width="14" height="14" rx="2.5" fill="#e9ecf0"/></svg>
<svg style="left:1610.00px;top:854.00px" width="14" height="14" viewBox="0 0 14 14"><rect x="0" y="0" width="14" height="14" rx="2.5" fill="#e9ecf0"/></svg>
<svg style="left:1661.00px;top:854.00px" width="14" height="14" viewBox="0 0 14 14"><rect x="0" y="0" width="14" height="14" rx="2.5" fill="#e9ecf0"/></svg>
<svg style="left:1712.00px;top:854.00px" width="14" height="14" viewBox="0 0 14 14"><rect x="0" y="0" width="14" height="14" rx="2.5" fill="#e9ecf0"/></svg>
<svg style="left:1764.00px;top:854.00px" width="14" height="14" viewBox="0 0 14 14"><rect x="0" y="0" width="14" height="14" rx="2.5" fill="#e9ecf0"/></svg>
<svg style="left:1818.00px;top:854.00px" width="14" height="14" viewBox="0 0 14 14"><rect x="0" y="0" width="14" height="14" rx="2.5" fill="#e9ecf0"/></svg>
<svg style="left:620.00px;top:877.30px" width="14" height="14" viewBox="0 0 14 14"><rect x="0" y="0" width="14" height="14" rx="2.5" fill="#e9ecf0"/></svg>
<svg style="left:670.00px;top:877.30px" width="14" height="14" viewBox="0 0 14 14"><rect x="0" y="0" width="14" height="14" rx="2.5" fill="#e9ecf0"/><path d="M3.3 7.0 L5.9 9.8 L10.6 3.4" fill="none" stroke="#8a8f94" stroke-width="2.6"/></svg>
<svg style="left:723.00px;top:877.30px" width="14" height="14" viewBox="0 0 14 14"><rect x="0" y="0" width="14" height="14" rx="2.5" fill="#e9ecf0"/></svg>
<svg style="left:776.00px;top:877.30px" width="14" height="14" viewBox="0 0 14 14"><rect x="0" y="0" width="14" height="14" rx="2.5" fill="#e9ecf0"/></svg>
<svg style="left:828.00px;top:877.30px" width="14" height="14" viewBox="0 0 14 14"><rect x="0" y="0" width="14" height="14" rx="2.5" fill="#e9ecf0"/><path d="M3.3 7.0 L5.9 9.8 L10.6 3.4" fill="none" stroke="#8a8f94" stroke-width="2.6"/></svg>
<svg style="left:878.00px;top:877.30px" width="14" height="14" viewBox="0 0 14 14"><rect x="0" y="0" width="14" height="14" rx="2.5" fill="#e9ecf0"/></svg>
<svg style="left:931.00px;top:877.30px" width="14" height="14" viewBox="0 0 14 14"><rect x="0" y="0" width="14" height="14" rx="2.5" fill="#e9ecf0"/><path d="M3.3 7.0 L5.9 9.8 L10.6 3.4" fill="none" stroke="#8a8f94" stroke-width="2.6"/></svg>
<svg style="left:984.00px;top:877.30px" width="14" height="14" viewBox="0 0 14 14"><rect x="0" y="0" width="14" height="14" rx="2.5" fill="#e9ecf0"/></svg>
<svg style="left:1036.00px;top:877.30px" width="14" height="14" viewBox="0 0 14 14"><rect x="0" y="0" width="14" height="14" rx="2.5" fill="#e9ecf0"/></svg>
<svg style="left:1087.00px;top:877.30px" width="14" height="14" viewBox="0 0 14 14"><rect x="0" y="0" width="14" height="14" rx="2.5" fill="#e9ecf0"/><path d="M3.3 7.0 L5.9 9.8 L10.6 3.4" fill="none" stroke="#8a8f94" stroke-width="2.6"/></svg>
<svg style="left:1140.00px;top:877.30px" width="14" height="14" viewBox="0 0 14 14"><rect x="0" y="0" width="14" height="14" rx="2.5" fill="#e9ecf0"/></svg>
<svg style="left:1194.00px;top:877.30px" width="14" height="14" viewBox="0 0 14 14"><rect x="0" y="0" width="14" height="14" rx="2.5" fill="#e9ecf0"/></svg>
<svg style="left:1245.00px;top:877.30px" width="14" height="14" viewBox="0 0 14 14"><rect x="0" y="0" width="14" height="14" rx="2.5" fill="#e9ecf0"/></svg>
<svg style="left:1296.00px;top:877.30px" width="14" height="14" viewBox="0 0 14 14"><rect x="0" y="0" width="14" height="14" rx="2.5" fill="#e9ecf0"/><path d="M3.3 7.0 L5.9 9.8 L10.6 3.4" fill="none" stroke="#8a8f94" stroke-width="2.6"/></svg>
<svg style="left:1348.00px;top:877.30px" width="14" height="14" viewBox="0 0 14 14"><rect x="0" y="0" width="14" height="14" rx="2.5" fill="#e9ecf0"/></svg>
<svg style="left:1401.00px;top:877.30px" width="14" height="14" viewBox="0 0 14 14"><rect x="0" y="0" width="14" height="14" rx="2.5" fill="#e9ecf0"/></svg>
<svg style="left:1453.00px;top:877.30px" width="14" height="14" viewBox="0 0 14 14"><rect x="0" y="0" width="14" height="14" rx="2.5" fill="#e9ecf0"/></svg>
<svg style="left:1504.00px;top:877.30px" width="14" height="14" viewBox="0 0 14 14"><rect x="0" y="0" width="14" height="14" rx="2.5" fill="#e9ecf0"/><path d="M3.3 7.0 L5.9 9.8 L10.6 3.4" fill="none" stroke="#8a8f94" stroke-width="2.6"/></svg>
<svg style="left:1556.00px;top:877.30px" width="14" height="14" viewBox="0 0 14 14"><rect x="0" y="0" width="14" height="14" rx="2.5" fill="#e9ecf0"/></svg>
<svg style="left:1610.00px;top:877.30px" width="14" height="14" viewBox="0 0 14 14"><rect x="0" y="0" width="14" height="14" rx="2.5" fill="#e9ecf0"/></svg>
<svg style="left:1661.00px;top:877.30px" width="14" height="14" viewBox="0 0 14 14"><rect x="0" y="0" width="14" height="14" rx="2.5" fill="#e9ecf0"/></svg>
<svg style="left:1712.00px;top:877.30px" width="14" height="14" viewBox="0 0 14 14"><rect x="0" y="0" width="14" height="14" rx="2.5" fill="#e9ecf0"/></svg>
<svg style="left:1764.00px;top:877.30px" width="14" height="14" viewBox="0 0 14 14"><rect x="0" y="0" width="14" height="14" rx="2.5" fill="#e9ecf0"/></svg>
<svg style="left:1818.00px;top:877.30px" width="14" height="14" viewBox="0 0 14 14"><rect x="0" y="0" width="14" height="14" rx="2.5" fill="#e9ecf0"/></svg>
<svg style="left:620.00px;top:900.60px" width="14" height="14" viewBox="0 0 14 14"><rect x="0" y="0" width="14" height="14" rx="2.5" fill="#e9ecf0"/></svg>
<svg style="left:670.00px;top:900.60px" width="14" height="14" viewBox="0 0 14 14"><rect x="0" y="0" width="14" height="14" rx="2.5" fill="#e9ecf0"/><path d="M3.3 7.0 L5.9 9.8 L10.6 3.4" fill="none" stroke="#8a8f94" stroke-width="2.6"/></svg>
<svg style="left:723.00px;top:900.60px" width="14" height="14" viewBox="0 0 14 14"><rect x="0" y="0" width="14" height="14" rx="2.5" fill="#e9ecf0"/></svg>
<svg style="left:776.00px;top:900.60px" width="14" height="14" viewBox="0 0 14 14"><rect x="0" y="0" width="14" height="14" rx="2.5" fill="#e9ecf0"/></svg>
<svg style="left:828.00px;top:900.60px" width="14" height="14" viewBox="0 0 14 14"><rect x="0" y="0" width="14" height="14" rx="2.5" fill="#e9ecf0"/></svg>
<svg style="left:878.00px;top:900.60px" width="14" height="14" viewBox="0 0 14 14"><rect x="0" y="0" width="14" height="14" rx="2.5" fill="#e9ecf0"/><path d="M3.3 7.0 L5.9 9.8 L10.6 3.4" fill="none" stroke="#8a8f94" stroke-width="2.6"/></svg>
<svg style="left:931.00px;top:900.60px" width="14" height="14" viewBox="0 0 14 14"><rect x="0" y="0" width="14" height="14" rx="2.5" fill="#e9ecf0"/></svg>
<svg style="left:984.00px;top:900.60px" width="14" height="14" viewBox="0 0 14 14"><rect x="0" y="0" width="14" height="14" rx="2.5" fill="#e9ecf0"/></svg>
<svg style="left:1036.00px;top:900.60px" width="14" height="14" viewBox="0 0 14 14"><rect x="0" y="0" width="14" height="14" rx="2.5" fill="#e9ecf0"/></svg>
<svg style="left:1087.00px;top:900.60px" width="14" height="14" viewBox="0 0 14 14"><rect x="0" y="0" width="14" height="14" rx="2.5" fill="#e9ecf0"/><path d="M3.3 7.0 L5.9 9.8 L10.6 3.4" fill="none" stroke="#8a8f94" stroke-width="2.6"/></svg>
<svg style="left:1140.00px;top:900.60px" width="14" height="14" viewBox="0 0 14 14"><rect x="0" y="0" width="14" height="14" rx="2.5" fill="#e9ecf0"/></svg>
<svg style="left:1194.00px;top:900.60px" width="14" height="14" viewBox="0 0 14 14"><rect x="0" y="0" width="14" height="14" rx="2.5" fill="#e9ecf0"/></svg>
<svg style="left:1245.00px;top:900.60px" width="14" height="14" viewBox="0 0 14 14"><rect x="0" y="0" width="14" height="14" rx="2.5" fill="#e9ecf0"/></svg>
<svg style="left:1296.00px;top:900.60px" width="14" height="14" viewBox="0 0 14 14"><rect x="0" y="0" width="14" height="14" rx="2.5" fill="#e9ecf0"/><path d="M3.3 7.0 L5.9 9.8 L10.6 3.4" fill="none" stroke="#8a8f94" stroke-width="2.6"/></svg>
<svg style="left:1348.00px;top:900.60px" width="14" height="14" viewBox="0 0 14 14"><rect x="0" y="0" width="14" height="14" rx="2.5" fill="#e9ecf0"/></svg>
<svg style="left:1401.00px;top:900.60px" width="14" height="14" viewBox="0 0 14 14"><rect x="0" y="0" width="14" height="14" rx="2.5" fill="#e9ecf0"/></svg>
<svg style="left:1453.00px;top:900.60px" width="14" height="14" viewBox="0 0 14 14"><rect x="0" y="0" width="14" height="14" rx="2.5" fill="#e9ecf0"/></svg>
<svg style="left:1504.00px;top:900.60px" width="14" height="14" viewBox="0 0 14 14"><rect x="0" y="0" width="14" height="14" rx="2.5" fill="#e9ecf0"/><path d="M3.3 7.0 L5.9 9.8 L10.6 3.4" fill="none" stroke="#8a8f94" stroke-width="2.6"/></svg>
<svg style="left:1556.00px;top:900.60px" width="14" height="14" viewBox="0 0 14 14"><rect x="0" y="0" width="14" height="14" rx="2.5" fill="#e9ecf0"/></svg>
<svg style="left:1610.00px;top:900.60px" width="14" height="14" viewBox="0 0 14 14"><rect x="0" y="0" width="14" height="14" rx="2.5" fill="#e9ecf0"/></svg>
<svg style="left:1661.00px;top:900.60px" width="14" height="14" viewBox="0 0 14 14"><rect x="0" y="0" width="14" height="14" rx="2.5" fill="#e9ecf0"/></svg>
<svg style="left:1712.00px;top:900.60px" width="14" height="14" viewBox="0 0 14 14"><rect x="0" y="0" width="14" height="14" rx="2.5" fill="#e9ecf0"/></svg>
<svg style="left:1764.00px;top:900.60px" width="14" height="14" viewBox="0 0 14 14"><rect x="0" y="0" width="14" height="14" rx="2.5" fill="#e9ecf0"/></svg>
<svg style="left:1818.00px;top:900.60px" width="14" height="14" viewBox="0 0 14 14"><rect x="0" y="0" width="14" height="14" rx="2.5" fill="#e9ecf0"/></svg>
<svg style="left:620.00px;top:923.90px" width="14" height="14" viewBox="0 0 14 14"><rect x="0" y="0" width="14" height="14" rx="2.5" fill="#e9ecf0"/></svg>
<svg style="left:670.00px;top:923.90px" width="14" height="14" viewBox="0 0 14 14"><rect x="0" y="0" width="14" height="14" rx="2.5" fill="#e9ecf0"/><path d="M3.3 7.0 L5.9 9.8 L10.6 3.4" fill="none" stroke="#8a8f94" stroke-width="2.6"/></svg>
<svg style="left:723.00px;top:923.90px" width="14" height="14" viewBox="0 0 14 14"><rect x="0" y="0" width="14" height="14" rx="2.5" fill="#e9ecf0"/></svg>
<svg style="left:776.00px;top:923.90px" width="14" height="14" viewBox="0 0 14 14"><rect x="0" y="0" width="14" height="14" rx="2.5" fill="#e9ecf0"/></svg>
<svg style="left:828.00px;top:923.90px" width="14" height="14" viewBox="0 0 14 14"><rect x="0" y="0" width="14" height="14" rx="2.5" fill="#e9ecf0"/></svg>
<svg style="left:878.00px;top:923.90px" width="14" height="14" viewBox="0 0 14 14"><rect x="0" y="0" width="14" height="14" rx="2.5" fill="#e9ecf0"/><path d="M3.3 7.0 L5.9 9.8 L10.6 3.4" fill="none" stroke="#8a8f94" stroke-width="2.6"/></svg>
<svg style="left:931.00px;top:923.90px" width="14" height="14" viewBox="0 0 14 14"><rect x="0" y="0" width="14" height="14" rx="2.5" fill="#e9ecf0"/></svg>
<svg style="left:984.00px;top:923.90px" width="14" height="14" viewBox="0 0 14 14"><rect x="0" y="0" width="14" height="14" rx="2.5" fill="#e9ecf0"/></svg>
<svg style="left:1036.00px;top:923.90px" width="14" height="14" viewBox="0 0 14 14"><rect x="0" y="0" width="14" height="14" rx="2.5" fill="#e9ecf0"/></svg>
<svg style="left:1087.00px;top:923.90px" width="14" height="14" viewBox="0 0 14 14"><rect x="0" y="0" width="14" height="14" rx="2.5" fill="#e9ecf0"/><path d="M3.3 7.0 L5.9 9.8 L10.6 3.4" fill="none" stroke="#8a8f94" stroke-width="2.6"/></svg>
<svg style="left:1140.00px;top:923.90px" width="14" height="14" viewBox="0 0 14 14"><rect x="0" y="0" width="14" height="14" rx="2.5" fill="#e9ecf0"/></svg>
<svg style="left:1194.00px;top:923.90px" width="14" height="14" viewBox="0 0 14 14"><rect x="0" y="0" width="14" height="14" rx="2.5" fill="#e9ecf0"/></svg>
<svg style="left:1245.00px;top:923.90px" width="14" height="14" viewBox="0 0 14 14"><rect x="0" y="0" width="14" height="14" rx="2.5" fill="#e9ecf0"/></svg>
<svg style="left:1296.00px;top:923.90px" width="14" height="14" viewBox="0 0 14 14"><rect x="0" y="0" width="14" height="14" rx="2.5" fill="#e9ecf0"/><path d="M3.3 7.0 L5.9 9.8 L10.6 3.4" fill="none" stroke="#8a8f94" stroke-width="2.6"/></svg>
<svg style="left:1348.00px;top:923.90px" width="14" height="14" viewBox="0 0 14 14"><rect x="0" y="0" width="14" height="14" rx="2.5" fill="#e9ecf0"/></svg>
<svg style="left:1401.00px;top:923.90px" width="14" height="14" viewBox="0 0 14 14"><rect x="0" y="0" width="14" height="14" rx="2.5" fill="#e9ecf0"/></svg>
<svg style="left:1453.00px;top:923.90px" width="14" height="14" viewBox="0 0 14 14"><rect x="0" y="0" width="14" height="14" rx="2.5" fill="#e9ecf0"/></svg>
<svg style="left:1504.00px;top:923.90px" width="14" height="14" viewBox="0 0 14 14"><rect x="0" y="0" width="14" height="14" rx="2.5" fill="#e9ecf0"/><path d="M3.3 7.0 L5.9 9.8 L10.6 3.4" fill="none" stroke="#8a8f94" stroke-width="2.6"/></svg>
<svg style="left:1556.00px;top:923.90px" width="14" height="14" viewBox="0 0 14 14"><rect x="0" y="0" width="14" height="14" rx="2.5" fill="#e9ecf0"/></svg>
<svg style="left:1610.00px;top:923.90px" width="14" height="14" viewBox="0 0 14 14"><rect x="0" y="0" width="14" height="14" rx="2.5" fill="#e9ecf0"/></svg>
<svg style="left:1661.00px;top:923.90px" width="14" height="14" viewBox="0 0 14 14"><rect x="0" y="0" width="14" height="14" rx="2.5" fill="#e9ecf0"/></svg>
<svg style="left:1712.00px;top:923.90px" width="14" height="14" viewBox="0 0 14 14"><rect x="0" y="0" width="14" height="14" rx="2.5" fill="#e9ecf0"/></svg>
<svg style="left:1764.00px;top:923.90px" width="14" height="14" viewBox="0 0 14 14"><rect x="0" y="0" width="14" height="14" rx="2.5" fill="#e9ecf0"/></svg>
<svg style="left:1818.00px;top:923.90px" width="14" height="14" viewBox="0 0 14 14"><rect x="0" y="0" width="14" height="14" rx="2.5" fill="#e9ecf0"/></svg>
<svg style="left:620.00px;top:947.20px" width="14" height="14" viewBox="0 0 14 14"><rect x="0" y="0" width="14" height="14" rx="2.5" fill="#e9ecf0"/></svg>
<svg style="left:670.00px;top:947.20px" width="14" height="14" viewBox="0 0 14 14"><rect x="0" y="0" width="14" height="14" rx="2.5" fill="#e9ecf0"/><path d="M3.3 7.0 L5.9 9.8 L10.6 3.4" fill="none" stroke="#8a8f94" stroke-width="2.6"/></svg>
<svg style="left:723.00px;top:947.20px" width="14" height="14" viewBox="0 0 14 14"><rect x="0" y="0" width="14" height="14" rx="2.5" fill="#e9ecf0"/></svg>
<svg style="left:776.00px;top:947.20px" width="14" height="14" viewBox="0 0 14 14"><rect x="0" y="0" width="14" height="14" rx="2.5" fill="#e9ecf0"/></svg>
<svg style="left:828.00px;top:947.20px" width="14" height="14" viewBox="0 0 14 14"><rect x="0" y="0" width="14" height="14" rx="2.5" fill="#e9ecf0"/></svg>
<svg style="left:878.00px;top:947.20px" width="14" height="14" viewBox="0 0 14 14"><rect x="0" y="0" width="14" height="14" rx="2.5" fill="#e9ecf0"/><path d="M3.3 7.0 L5.9 9.8 L10.6 3.4" fill="none" stroke="#8a8f94" stroke-width="2.6"/></svg>
<svg style="left:931.00px;top:947.20px" width="14" height="14" viewBox="0 0 14 14"><rect x="0" y="0" width="14" height="14" rx="2.5" fill="#e9ecf0"/></svg>
<svg style="left:984.00px;top:947.20px" width="14" height="14" viewBox="0 0 14 14"><rect x="0" y="0" width="14" height="14" rx="2.5" fill="#e9ecf0"/></svg>
<svg style="left:1036.00px;top:947.20px" width="14" height="14" viewBox="0 0 14 14"><rect x="0" y="0" width="14" height="14" rx="2.5" fill="#e9ecf0"/></svg>
<svg style="left:1087.00px;top:947.20px" width="14" height="14" viewBox="0 0 14 14"><rect x="0" y="0" width="14" height="14" rx="2.5" fill="#e9ecf0"/><path d="M3.3 7.0 L5.9 9.8 L10.6 3.4" fill="none" stroke="#8a8f94" stroke-width="2.6"/></svg>
<svg style="left:1140.00px;top:947.20px" width="14" height="14" viewBox="0 0 14 14"><rect x="0" y="0" width="14" height="14" rx="2.5" fill="#e9ecf0"/></svg>
<svg style="left:1194.00px;top:947.20px" width="14" height="14" viewBox="0 0 14 14"><rect x="0" y="0" width="14" height="14" rx="2.5" fill="#e9ecf0"/></svg>
<svg style="left:1245.00px;top:947.20px" width="14" height="14" viewBox="0 0 14 14"><rect x="0" y="0" width="14" height="14" rx="2.5" fill="#e9ecf0"/></svg>
<svg style="left:1296.00px;top:947.20px" width="14" height="14" viewBox="0 0 14 14"><rect x="0" y="0" width="14" height="14" rx="2.5" fill="#e9ecf0"/><path d="M3.3 7.0 L5.9 9.8 L10.6 3.4" fill="none" stroke="#8a8f94" stroke-width="2.6"/></svg>
<svg style="left:1348.00px;top:947.20px" width="14" height="14" viewBox="0 0 14 14"><rect x="0" y="0" width="14" height="14" rx="2.5" fill="#e9ecf0"/></svg>
<svg style="left:1401.00px;top:947.20px" width="14" height="14" viewBox="0 0 14 14"><rect x="0" y="0" width="14" height="14" rx="2.5" fill="#e9ecf0"/></svg>
<svg style="left:1453.00px;top:947.20px" width="14" height="14" viewBox="0 0 14 14"><rect x="0" y="0" width="14" height="14" rx="2.5" fill="#e9ecf0"/></svg>
<svg style="left:1504.00px;top:947.20px" width="14" height="14" viewBox="0 0 14 14"><rect x="0" y="0" width="14" height="14" rx="2.5" fill="#e9ecf0"/><path d="M3.3 7.0 L5.9 9.8 L10.6 3.4" fill="none" stroke="#8a8f94" stroke-width="2.6"/></svg>
<svg style="left:1556.00px;top:947.20px" width="14" height="14" viewBox="0 0 14 14"><rect x="0" y="0" width="14" height="14" rx="2.5" fill="#e9ecf0"/></svg>
<svg style="left:1610.00px;top:947.20px" width="14" height="14" viewBox="0 0 14 14"><rect x="0" y="0" width="14" height="14" rx="2.5" fill="#e9ecf0"/></svg>
<svg style="left:1661.00px;top:947.20px" width="14" height="14" viewBox="0 0 14 14"><rect x="0" y="0" width="14" height="14" rx="2.5" fill="#e9ecf0"/></svg>
<svg style="left:1712.00px;top:947.20px" width="14" height="14" viewBox="0 0 14 14"><rect x="0" y="0" width="14" height="14" rx="2.5" fill="#e9ecf0"/></svg>
<svg style="left:1764.00px;top:947.20px" width="14" height="14" viewBox="0 0 14 14"><rect x="0" y="0" width="14" height="14" rx="2.5" fill="#e9ecf0"/></svg>
<svg style="left:1818.00px;top:947.20px" width="14" height="14" viewBox="0 0 14 14"><rect x="0" y="0" width="14" height="14" rx="2.5" fill="#e9ecf0"/></svg>
<div class="r" style="left:1736.60px;top:944.70px;width:121.00px;height:33.00px;background:#fff;box-sizing:border-box;border:1px solid #c9d0d6;border-radius:4px;"></div>
<svg style="left:1747.5px;top:956.5px" width="10" height="6" viewBox="0 0 10 6"><path d="M0.3 5.3 L4.7 0.5 L9.2 5.3Z" fill="#6f7d89"/></svg>
<div class="t" style="left:1760.50px;top:952.91px;font-size:13.45px;font-weight:700;color:#6f7d89;">Seitenanfang</div>
<div class="r" style="left:39.00px;top:408.50px;width:45.00px;height:31.50px;background:transparent;box-sizing:border-box;border:2.4px solid #d9141c;border-radius:6px;box-shadow:1px 1px 3px rgba(0,0,0,0.18), inset 1px 1px 3px rgba(0,0,0,0.12);"></div>
<svg style="left:0;top:0;filter:drop-shadow(2px 2.5px 2.5px rgba(0,0,0,0.28))" width="260" height="460" viewBox="0 0 260 460"><path d="M232.60 248.80 L224.74 276.82 L221.92 271.12 L95.14 416.05 L94.06 415.15 L212.68 263.47 L207.28 261.21 Z" fill="#fe0000" stroke="#fe0000" stroke-width="0.4" stroke-linejoin="round"/></svg>
</body></html>
